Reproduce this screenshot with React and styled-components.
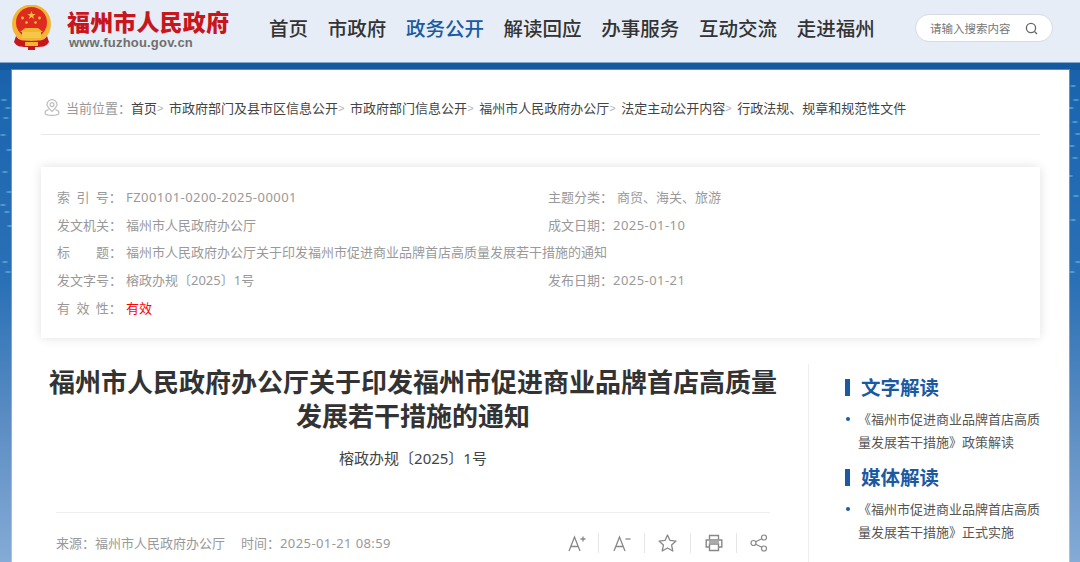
import React from "react";
import styled, { createGlobalStyle } from "styled-components";

const FONT = `"Noto Sans", "Noto Sans CJK SC", sans-serif`;
const CJK = `"Noto Sans CJK SC", "Noto Sans", sans-serif`;

const Global = createGlobalStyle`
  html, body { margin: 0; padding: 0; height: 562px; overflow: hidden; background: #fff; }
  body { font-family: ${FONT}; }
  * { box-sizing: border-box; }
`;

// Faint light-teal flecks of the page's picture background, visible in the side strips.
const flecks = [
  [4, 100], [8, 108], [6, 118], [3, 135], [9, 150], [5, 172], [9, 192], [3, 205], [7, 212], [10, 226], [5, 262], [8, 272],
  [1073, 86], [1076, 100], [1071, 108], [1075, 122], [1078, 134], [1072, 146], [1075, 158], [1070, 176], [1076, 196], [1073, 220], [1078, 262], [1072, 272],
]
  .map(([x, y]) => `radial-gradient(ellipse 4px 1.5px at ${x}px ${y}px, rgba(130, 205, 235, 0.75), transparent)`)
  .join(", ");

const Page = styled.div`
  width: 1080px;
  height: 562px;
  overflow: hidden;
  display: flex;
  flex-direction: column;
  background: ${flecks}, linear-gradient(180deg, #14589f 0, #1c66b0 18%, #2a70b6 50%, #5b8dc3 75%, #85abd6 100%);
`;

const Header = styled.header`
  height: 63px;
  flex: none;
  display: flex;
  align-items: center;
  background: #e6edf6;
  border-bottom: 1px solid #7fa6cf;
`;

const Logo = styled.div`
  width: 269px;
  flex: none;
  display: flex;
  align-items: flex-start;
  gap: 14px;
  padding: 0 0 0 11px;
  height: 48px;
  margin-top: -4px;
`;

const LogoText = styled.div`
  display: flex;
  flex-direction: column;
  padding: 3px 0 0 1px;
`;

const LogoTitle = styled.div`
  font-family: ${CJK};
  font-size: 23px;
  line-height: 26px;
  font-weight: 900;
  letter-spacing: 0.15px;
  color: #c8161d;
  white-space: nowrap;
`;

const LogoUrl = styled.div`
  font-family: "Liberation Sans", sans-serif;
  font-size: 13px;
  line-height: 18px;
  font-weight: 700;
  letter-spacing: 0.2px;
  color: #6f6f6f;
  margin: 0 0 0 2px;
`;

const Nav = styled.nav`
  display: flex;
  gap: 19.7px;
  width: 646px;
  flex: none;
  margin-bottom: 7px;
`;

const NavItem = styled.a`
  font-family: ${CJK};
  font-size: 19.5px;
  font-weight: 500;
  line-height: 28px;
  white-space: nowrap;
  color: ${p => (p.$active ? "#1a5aa3" : "#333")};
`;

const Search = styled.div`
  width: 138px;
  height: 28px;
  margin-bottom: 6px;
  border: 1px solid #d8dade;
  border-radius: 14px;
  background: #fff;
  display: flex;
  align-items: center;
  justify-content: space-between;
  padding: 0 14px 0 14px;
  font-size: 11.5px;
  color: #777;
`;

const Band = styled.div`
  height: 7px;
  flex: none;
  background: #14589f;
`;

const Main = styled.main`
  flex: 1;
  margin: 0 11px 0 12px;
  background: #fff;
  box-shadow: 0 0 0 1px rgba(255, 255, 255, 0.3);
  padding: 0 29px;
  min-height: 0;
`;

const Crumbs = styled.div`
  height: 65px;
  margin: 0;
  border-bottom: 1px solid #e8e8e8;
  display: flex;
  align-items: center;
  padding: 11px 0 0 3px;
  font-size: 13px;
  color: #444;
  white-space: nowrap;
`;

const CrumbLabel = styled.span`
  color: #999;
  margin: 0 0 0 6px;
`;

const CrumbSep = styled.span`
  color: #b5b5b5;
  font-size: 11px;
  margin: 0 5.6px 0 0;
  font-family: "Liberation Sans", sans-serif;
`;

const MetaCard = styled.section`
  margin-top: 32px;
  height: 171px;
  padding: 16px 16px 0;
  background: #fff;
  box-shadow: 0 0 10px rgba(0, 0, 0, 0.12);
  display: grid;
  grid-template-columns: 491px 1fr;
  grid-auto-rows: 27.7px;
  font-size: 13px;
  color: #999;
  align-items: center;
`;

const MetaCell = styled.div`
  display: flex;
  align-items: baseline;
  line-height: 20px;
  white-space: nowrap;
  grid-column: ${p => (p.$wide ? "1 / -1" : "auto")};
`;

const MetaLabel = styled.span`
  width: ${p => p.$w || 69}px;
  flex: none;
  white-space: pre;
  word-spacing: 3px;
  color: #999;
`;

const MetaValue = styled.span`
  color: ${p => (p.$red ? "#f00" : "#999")};
  letter-spacing: ${p => (p.$num ? "0.45px" : "0")};
  padding-left: ${p => p.$indent || 0}px;
`;

const Columns = styled.div`
  display: flex;
  margin-top: 26px;
`;

const Article = styled.article`
  width: 767px;
  flex: none;
  padding: 0 23px 0 0;
`;

const Title = styled.h1`
  margin: 0;
  font-family: ${CJK};
  font-size: 26px;
  line-height: 34px;
  font-weight: 700;
  color: #333;
  text-align: center;
`;

const DocNo = styled.div`
  margin-top: 15px;
  text-align: center;
  font-size: 15px;
  line-height: 22px;
  color: #444;
`;

const ArticleMeta = styled.div`
  margin: 43px 15px 0 15px;
  padding-top: 15px;
  border-top: 1px solid #eee;
  display: flex;
  align-items: center;
  justify-content: space-between;
  font-size: 13px;
  line-height: 30px;
  color: #999;
`;

const Source = styled.div`
  display: flex;
  gap: 16px;
`;

const Stamp = styled.span`
  letter-spacing: 0.4px;
`;

const Tools = styled.div`
  display: flex;
  align-items: center;
`;

const Tool = styled.span`
  width: 46px;
  height: 20px;
  display: flex;
  align-items: center;
  justify-content: center;
  color: #888;
  padding-left: ${p => (p.$first ? 3 : 0)}px;
  border-left: ${p => (p.$first ? "none" : "1px solid #e6e6e6")};
  &:last-child { width: 34px; justify-content: flex-end; padding-right: 2px; }
`;

const Side = styled.aside`
  flex: 1;
  border-left: 1px solid #eee;
  padding: 8px 0 0 36px;
  height: 230px;
`;

const SideHead = styled.h2`
  margin: 0 0 6px;
  font-family: ${CJK};
  font-size: 19.5px;
  line-height: 30px;
  font-weight: 700;
  color: #1a5aa3;
  display: flex;
  align-items: center;
  gap: 11px;
  &::before {
    content: "";
    width: 5px;
    height: 17px;
    background: #1a5aa3;
  }
`;

const SideList = styled.ul`
  margin: 0 0 8px;
  padding: 0;
  list-style: none;
`;

const SideItem = styled.li`
  position: relative;
  padding-left: 13px;
  font-size: 13px;
  line-height: 23px;
  width: 195px;
  color: #555;
  &::before {
    content: "";
    position: absolute;
    left: 1px;
    top: 9px;
    width: 4px;
    height: 4px;
    border-radius: 50%;
    background: #1a5aa3;
  }
`;

const Emblem = () => (
  <svg width="41" height="45" viewBox="0 0 41 45">
    <circle cx="20.5" cy="19" r="19.5" fill="#f2b632" />
    <circle cx="20.5" cy="17.5" r="15.5" fill="#e02a20" />
    <polygon points="20.5,6 21.5,9 24.7,9 22.1,10.9 23.1,14 20.5,12.1 17.9,14 18.9,10.9 16.3,9 19.5,9" fill="#f6c53c" />
    <circle cx="11.5" cy="13" r="1.4" fill="#f6c53c" />
    <circle cx="28.5" cy="13" r="1.4" fill="#f6c53c" />
    <circle cx="15.5" cy="17.5" r="1.3" fill="#f6c53c" />
    <circle cx="24.5" cy="17.5" r="1.3" fill="#f6c53c" />
    <rect x="11" y="27" width="19" height="6" fill="#f4c64a" />
    <path d="M9 27 L14 23 H27 L32 27Z" fill="#f2b632" />
    <path d="M5 31 C9 37 14 35 20.5 36 C27 35 32 37 36 31 L38 37 C33 45 26 40 20.5 43 C15 40 8 45 3 37Z" fill="#c6161c" />
    <rect x="14" y="37" width="13" height="4" fill="#f2b632" />
    <rect x="17" y="41" width="7" height="4" fill="#c6161c" />
  </svg>
);

const Pin = () => (
  <svg width="16" height="17" viewBox="0 0 16 17" fill="none" stroke="#bdbdbd" strokeWidth="1.2">
    <path d="M8 12.5 C5.6 10 3 8 3 5.6 A5 5 0 0 1 13 5.6 C13 8 10.4 10 8 12.5Z" />
    <circle cx="8" cy="5.6" r="2" />
    <path d="M4.6 10.5 C2.5 11.2 1 12.3 1 13.7 C1 15.3 4 16.3 8 16.3 C12 16.3 15 15.3 15 13.7 C15 12.3 13.5 11.2 11.4 10.5" />
  </svg>
);

const SearchIcon = () => (
  <svg width="13" height="13" viewBox="0 0 13 13" fill="none" stroke="#666" strokeWidth="1.3">
    <circle cx="6" cy="6" r="4.6" />
    <path d="M9.5 9.5 L12 12" />
  </svg>
);

const FontUp = () => (
  <svg width="18" height="17" viewBox="0 0 18 17" fill="none" stroke="#888" strokeWidth="1.3">
    <path d="M1 16 L6.5 2 L12 16 M3 11.5 H10" />
    <path d="M12.5 4 H17.5 M15 1.5 V6.5" />
  </svg>
);

const FontDown = () => (
  <svg width="18" height="17" viewBox="0 0 18 17" fill="none" stroke="#888" strokeWidth="1.3">
    <path d="M1 16 L6.5 2 L12 16 M3 11.5 H10" />
    <path d="M12.5 4 H17.5" />
  </svg>
);

const Star = () => (
  <svg width="19" height="18" viewBox="0 0 19 18" fill="none" stroke="#888" strokeWidth="1.3" strokeLinejoin="round">
    <path d="M9.5 1 L12 6.4 L18 7.1 L13.6 11.1 L14.8 17 L9.5 14 L4.2 17 L5.4 11.1 L1 7.1 L7 6.4Z" />
  </svg>
);

const Printer = () => (
  <svg width="18" height="18" viewBox="0 0 18 18" fill="none" stroke="#888" strokeWidth="1.4">
    <path d="M4.5 5.5 V1.5 H13.5 V5.5" />
    <path d="M4.5 13 H1.2 V6 H16.8 V13 H13.5" />
    <path d="M4.5 10 H13.5 V16.5 H4.5Z" />
    <path d="M4 8 H14" />
  </svg>
);

const Share = () => (
  <svg width="18" height="18" viewBox="0 0 18 18" fill="none" stroke="#888" strokeWidth="1.2">
    <circle cx="3.5" cy="9" r="2.5" />
    <circle cx="14" cy="3.5" r="2.5" />
    <circle cx="14" cy="14.5" r="2.5" />
    <path d="M5.7 7.8 L11.8 4.7 M5.7 10.2 L11.8 13.3" />
  </svg>
);

const navItems = ["首页", "市政府", "政务公开", "解读回应", "办事服务", "互动交流", "走进福州"];
const crumbs = ["首页", "市政府部门及县市区信息公开", "市政府部门信息公开", "福州市人民政府办公厅", "法定主动公开内容", "行政法规、规章和规范性文件"];

export default function App() {
  return (
    <Page>
      <Global />
      <Header>
        <Logo>
          <Emblem />
          <LogoText>
            <LogoTitle>福州市人民政府</LogoTitle>
            <LogoUrl>www.fuzhou.gov.cn</LogoUrl>
          </LogoText>
        </Logo>
        <Nav>
          {navItems.map((n, i) => (
            <NavItem key={n} $active={i === 2}>{n}</NavItem>
          ))}
        </Nav>
        <Search>
          <span>请输入搜索内容</span>
          <SearchIcon />
        </Search>
      </Header>
      <Band />
      <Main>
        <Crumbs>
          <Pin />
          <CrumbLabel>当前位置：</CrumbLabel>
          {crumbs.map((c, i) => (
            <React.Fragment key={c}>
              <span>{c}</span>
              {i < crumbs.length - 1 && <CrumbSep>&gt;</CrumbSep>}
            </React.Fragment>
          ))}
        </Crumbs>
        <MetaCard>
          <MetaCell><MetaLabel>{"索 引 号："}</MetaLabel><MetaValue $num>FZ00101-0200-2025-00001</MetaValue></MetaCell>
          <MetaCell><MetaLabel $w={65}>主题分类：</MetaLabel><MetaValue $indent={4}>商贸、海关、旅游</MetaValue></MetaCell>
          <MetaCell><MetaLabel>发文机关：</MetaLabel><MetaValue>福州市人民政府办公厅</MetaValue></MetaCell>
          <MetaCell><MetaLabel $w={65}>成文日期：</MetaLabel><MetaValue $num>2025-01-10</MetaValue></MetaCell>
          <MetaCell $wide><MetaLabel>{"标　　题："}</MetaLabel><MetaValue>福州市人民政府办公厅关于印发福州市促进商业品牌首店高质量发展若干措施的通知</MetaValue></MetaCell>
          <MetaCell><MetaLabel>发文字号：</MetaLabel><MetaValue>榕政办规〔2025〕1号</MetaValue></MetaCell>
          <MetaCell><MetaLabel $w={65}>发布日期：</MetaLabel><MetaValue $num>2025-01-21</MetaValue></MetaCell>
          <MetaCell $wide><MetaLabel>{"有 效 性："}</MetaLabel><MetaValue $red>有效</MetaValue></MetaCell>
        </MetaCard>
        <Columns>
          <Article>
            <Title>福州市人民政府办公厅关于印发福州市促进商业品牌首店高质量发展若干措施的通知</Title>
            <DocNo>榕政办规〔2025〕1号</DocNo>
            <ArticleMeta>
              <Source>
                <span>来源：福州市人民政府办公厅</span>
                <span>时间：<Stamp>2025-01-21 08:59</Stamp></span>
              </Source>
              <Tools>
                <Tool $first><FontUp /></Tool>
                <Tool><FontDown /></Tool>
                <Tool><Star /></Tool>
                <Tool><Printer /></Tool>
                <Tool><Share /></Tool>
              </Tools>
            </ArticleMeta>
          </Article>
          <Side>
            <SideHead>文字解读</SideHead>
            <SideList>
              <SideItem>《福州市促进商业品牌首店高质量发展若干措施》政策解读</SideItem>
            </SideList>
            <SideHead>媒体解读</SideHead>
            <SideList>
              <SideItem>《福州市促进商业品牌首店高质量发展若干措施》正式实施</SideItem>
            </SideList>
          </Side>
        </Columns>
      </Main>
    </Page>
  );
}
